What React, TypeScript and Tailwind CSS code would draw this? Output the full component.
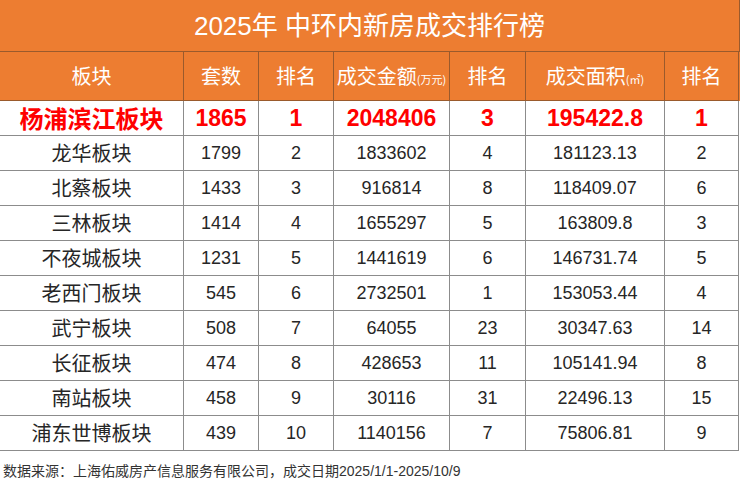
import React from "react";

interface Row {
    name: string;
    units: string;
    unitsRank: string;
    amount: string;
    amountRank: string;
    area: string;
    areaRank: string;
}

const rows: Row[] = [
    { name: "龙华板块", units: "1799", unitsRank: "2", amount: "1833602", amountRank: "4", area: "181123.13", areaRank: "2" },
    { name: "北蔡板块", units: "1433", unitsRank: "3", amount: "916814", amountRank: "8", area: "118409.07", areaRank: "6" },
    { name: "三林板块", units: "1414", unitsRank: "4", amount: "1655297", amountRank: "5", area: "163809.8", areaRank: "3" },
    { name: "不夜城板块", units: "1231", unitsRank: "5", amount: "1441619", amountRank: "6", area: "146731.74", areaRank: "5" },
    { name: "老西门板块", units: "545", unitsRank: "6", amount: "2732501", amountRank: "1", area: "153053.44", areaRank: "4" },
    { name: "武宁板块", units: "508", unitsRank: "7", amount: "64055", amountRank: "23", area: "30347.63", areaRank: "14" },
    { name: "长征板块", units: "474", unitsRank: "8", amount: "428653", amountRank: "11", area: "105141.94", areaRank: "8" },
    { name: "南站板块", units: "458", unitsRank: "9", amount: "30116", amountRank: "31", area: "22496.13", areaRank: "15" },
    { name: "浦东世博板块", units: "439", unitsRank: "10", amount: "1140156", amountRank: "7", area: "75806.81", areaRank: "9" },
];

const cols = "grid grid-cols-[184px_75px_75px_116px_76px_139px_74px]";
const cjk = "font-['Noto_Sans_CJK_SC',sans-serif]";
const num = "font-['Liberation_Sans','Noto_Sans_CJK_SC',sans-serif]";

const HeadCell = ({ children }: { children: React.ReactNode }) => (
    <div className={`h-[49px] flex items-center justify-center border-r border-b border-[#9a5a2c] text-white text-[20px] ${cjk}`}>
        {children}
    </div>
);

const Cell = ({ children, cn = false, top = false }: { children: React.ReactNode; cn?: boolean; top?: boolean }) => (
    <div
        className={`h-[35px] flex items-center justify-center border-r border-b border-[#8c8c8c] ${
            top
                ? `text-[#ff0000] font-bold ${cn ? `text-[24px] ${cjk}` : `text-[23px] ${num}`}`
                : `text-[#262626] ${cn ? `text-[20px] ${cjk}` : `text-[18px] ${num}`}`
        }`}
    >
        {children}
    </div>
);

export default function App() {
    return (
        <div className="w-[740px] h-[492px] bg-white overflow-hidden">
            <div className={`h-[52px] bg-[#ed7d31] border-b border-r border-[#9a5a2c] flex items-center justify-center text-white text-[26px] leading-none ${num}`}>
                2025年 中环内新房成交排行榜
            </div>

            <div className={`${cols} bg-[#ed7d31]`}>
                <HeadCell>板块</HeadCell>
                <HeadCell>套数</HeadCell>
                <HeadCell>排名</HeadCell>
                <HeadCell>
                    成交金额<span className="text-[11px] mt-[6px]">(万元)</span>
                </HeadCell>
                <HeadCell>排名</HeadCell>
                <HeadCell>
                    成交面积<span className="text-[11px] mt-[6px]">(㎡)</span>
                </HeadCell>
                <HeadCell>排名</HeadCell>
            </div>

            <div className={cols}>
                <Cell cn top>杨浦滨江板块</Cell>
                <Cell top>1865</Cell>
                <Cell top>1</Cell>
                <Cell top>2048406</Cell>
                <Cell top>3</Cell>
                <Cell top>195422.8</Cell>
                <Cell top>1</Cell>
                {rows.map((r) => (
                    <React.Fragment key={r.name}>
                        <Cell cn>{r.name}</Cell>
                        <Cell>{r.units}</Cell>
                        <Cell>{r.unitsRank}</Cell>
                        <Cell>{r.amount}</Cell>
                        <Cell>{r.amountRank}</Cell>
                        <Cell>{r.area}</Cell>
                        <Cell>{r.areaRank}</Cell>
                    </React.Fragment>
                ))}
            </div>

            <div className={`h-[41px] flex items-center pl-[3px] text-[14px] text-[#333] ${num}`}>
                数据来源：上海佑威房产信息服务有限公司，成交日期2025/1/1-2025/10/9
            </div>
        </div>
    );
}
